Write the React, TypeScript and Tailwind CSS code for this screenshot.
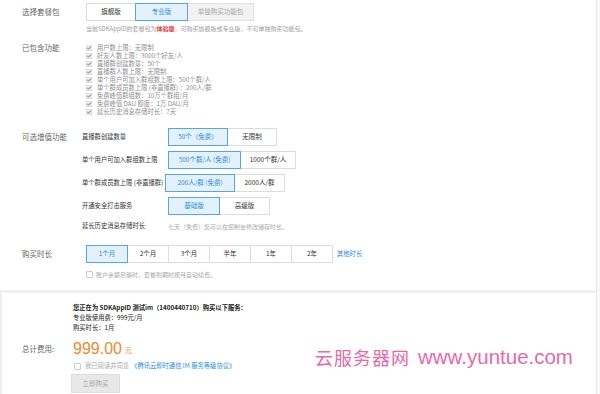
import React from "react"

const included = [
  "用户数上限：无限制",
  "好友人数上限：3000个好友/人",
  "直播群创建数量：50个",
  "直播群人数上限：无限制",
  "单个用户可加入群组数上限：500个群/人",
  "单个群成员数上限 (非直播群) ：200人/群",
  "免费峰值群组数：10万个群组/月",
  "免费峰值 DAU 额度：1万 DAU/月",
  "延长历史消息存储时长：7天",
]

const durations = ["1个月", "2个月", "3个月", "半年", "1年", "2年"]

function Seg({ label, w, active, disabled }: { label: string; w: string; active?: boolean; disabled?: boolean }) {
  let cls = "bg-white border-[#dcdcdc] text-[#333]"
  if (active) cls = "bg-[#e3f1fc] border-[#52a8e6] text-[#2a8edc] z-10"
  if (disabled) cls = "bg-[#f2f2f2] border-[#e2e2e2] text-[#a8a8a8]"
  return (
    <div className={`relative -ml-px first:ml-0 flex h-[18px] items-center justify-center border text-[6.5px] ${w} ${cls}`}>
      {label}
    </div>
  )
}

function Check() {
  return (
    <svg width="6" height="6" viewBox="0 0 6 6" className="shrink-0">
      <rect x="0.25" y="0.25" width="5.5" height="5.5" fill="#ececec" stroke="#cfcfcf" strokeWidth="0.5" />
      <path d="M1.3 3.1 L2.5 4.2 L4.7 1.7" fill="none" stroke="#555" strokeWidth="0.8" />
    </svg>
  )
}

function EmptyBox() {
  return <div className="h-[7px] w-[7px] shrink-0 rounded-[1px] border border-[#cccccc] bg-white" />
}

export default function App() {
  return (
    <div className="relative flex h-[394px] w-[600px] overflow-hidden bg-white font-['Noto_Sans_CJK_SC',sans-serif]">
      <div className="flex w-[597px] flex-col border-r border-[#e8e8e8]">
        {/* top settings */}
        <div className="pt-[3px]">
          {/* 选择套餐包 */}
          <div className="flex">
            <div className="w-[86px] pl-[22px] text-[7.5px] leading-[18px] text-[#666]">选择套餐包</div>
            <div className="flex flex-col">
              <div className="flex">
                <Seg label="旗舰版" w="w-[50px]" />
                <Seg label="专业版" w="w-[53px]" active />
                <Seg label="单独购买功能包" w="w-[67px]" disabled />
              </div>
              <div className="mt-[4px] text-[6px] leading-[8px] text-[#a0a0a0]">
                当前SDKAppID的套餐包为<span className="font-bold text-[#e5363a]">体验版</span>，可购买旗舰版或专业版，不可单独购买功能包。
              </div>
            </div>
          </div>

          {/* 已包含功能 */}
          <div className="mt-[11px] flex">
            <div className="w-[86px] pl-[22px] text-[7.5px] leading-[8px] text-[#666]">已包含功能</div>
            <div className="flex flex-col">
              {included.map((t) => (
                <div key={t} className="flex h-[8px] items-center gap-[5px] text-[6.3px] text-[#8f8f8f]">
                  <Check />
                  <span>{t}</span>
                </div>
              ))}
            </div>
          </div>

          {/* 可选增值功能 */}
          <div className="mt-[12px] flex">
            <div className="w-[82px] pl-[22px] text-[7.5px] leading-[18px] text-[#666]">可选增值功能</div>
            <div className="flex flex-col gap-[5px]">
              <div className="flex items-center">
                <div className="w-[86px] text-[6.3px] text-[#333]">直播群创建数量</div>
                <div className="flex">
                  <Seg label="50个（免费）" w="w-[60px]" active />
                  <Seg label="无限制" w="w-[50px]" />
                </div>
              </div>
              <div className="flex items-center">
                <div className="w-[86px] text-[6.3px] text-[#333]">单个用户可加入群组数上限</div>
                <div className="flex">
                  <Seg label="500个群/人 (免费)" w="w-[73px]" active />
                  <Seg label="1000个群/人" w="w-[56px]" />
                </div>
              </div>
              <div className="flex items-center">
                <div className="w-[83px] text-[6.3px] text-[#333]">单个群成员数上限 (非直播群)</div>
                <div className="flex">
                  <Seg label="200人/群 (免费)" w="w-[70px]" active />
                  <Seg label="2000人/群" w="w-[51px]" />
                </div>
              </div>
              <div className="flex items-center">
                <div className="w-[86px] text-[6.3px] text-[#333]">开通安全打击服务</div>
                <div className="flex">
                  <Seg label="基础版" w="w-[52px]" active />
                  <Seg label="高级版" w="w-[51px]" />
                </div>
              </div>
              <div className="mt-[2px] flex h-[8px] items-center">
                <div className="w-[86px] text-[6.3px] text-[#333]">延长历史消息存储时长</div>
                <div className="text-[6px] text-[#a8a8a8]">七天（免费）您可以在控制台修改储存时长。</div>
              </div>
            </div>
          </div>

          {/* 购买时长 */}
          <div className="mt-[15px] flex">
            <div className="w-[86px] pl-[22px] text-[7.5px] leading-[18px] text-[#666]">购买时长</div>
            <div className="flex flex-col">
              <div className="flex items-center">
                <div className="flex">
                  {durations.map((d, i) => (
                    <Seg key={d} label={d} w="w-[42px]" active={i === 0} />
                  ))}
                </div>
                <span className="ml-[4px] text-[6.3px] text-[#2a8edc]">其他时长</span>
              </div>
              <div className="mt-[7px] flex h-[8px] items-center gap-[3px] text-[6px] text-[#a8a8a8]">
                <EmptyBox />
                <span>账户余额足够时，套餐到期时按月自动续费。</span>
              </div>
            </div>
          </div>
        </div>

        <div className="mt-[12px] h-[3px] bg-[#f0f0f0]" />

        {/* bottom summary */}
        <div className="flex flex-1 flex-col border-l-2 border-[#eeeeee] pt-[10px]">
          <div className="pl-[71px] text-[6.3px] leading-[10px] text-[#222]">
            <div className="font-bold">您正在为 SDKAppID 测试im（1400440710）购买以下服务：</div>
            <div>专业版使用费：999元/月</div>
            <div>购买时长：1月</div>
          </div>
          <div className="mt-[7px] flex h-[18px] items-center">
            <div className="w-[71px] pl-[20px] text-[7.5px] text-[#666]">总计费用:</div>
            <span className="font-['Liberation_Sans',sans-serif] text-[16px] leading-[18px] text-[#ed8a2f]">999.00</span>
            <span className="ml-[3px] mt-[2px] text-[7px] text-[#ed8a2f]">元</span>
          </div>
          <div className="mt-[4px] flex h-[8px] items-center pl-[72px] text-[6.3px]">
            <EmptyBox />
            <span className="ml-[4px] text-[#a8a8a8]">我已阅读并同意</span>
            <span className="ml-[2px] text-[#2a8edc]">《腾讯云即时通信 IM 服务等级协议》</span>
          </div>
          <div className="mt-[4px] pl-[69px]">
            <div className="flex h-[19px] w-[49px] items-center justify-center border border-[#dddddd] bg-[#e8e8e8] text-[6.5px] text-[#a8a8a8]">
              立即购买
            </div>
          </div>
        </div>
      </div>
      <div className="flex-1 bg-[#f8f8f8]" />

      {/* watermark */}
      <div className="pointer-events-none absolute left-[315px] top-[345px] flex items-center whitespace-nowrap text-[#e66aa6]">
        <span className="text-[18px] leading-[24px] tracking-[1px]">云服务器网</span>
        <span className="ml-[8px] font-['Liberation_Sans',sans-serif] text-[20.5px] leading-[24px]">www.yuntue.com</span>
      </div>
    </div>
  )
}
